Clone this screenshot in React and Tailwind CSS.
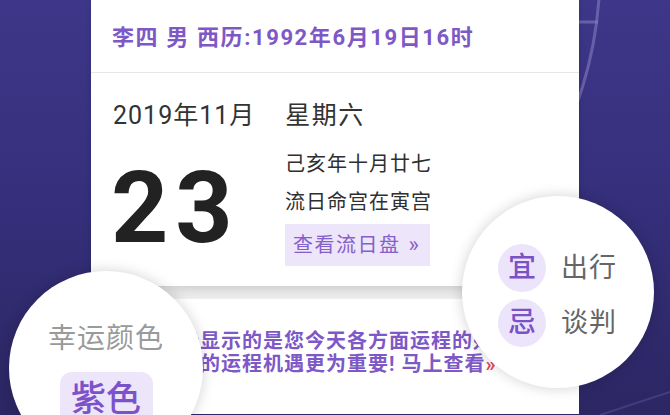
const cjk = { fontFamily: '"Roboto", "Noto Sans CJK SC", sans-serif' };

const Badge = ({ children }) => (
  <div className="w-[48px] h-[48px] rounded-full bg-[#ece4fa] flex items-center justify-center text-[28px] leading-none font-medium text-[#7a52c6]">
    {children}
  </div>
);

export default function App() {
  return (
    <div
      style={cjk}
      className="relative w-[670px] h-[415px] overflow-hidden bg-gradient-to-b from-[#3e3789] via-[#352f7b] to-[#2c2663]"
    >
      {/* faint wheel behind the card */}
      <svg className="absolute inset-0" width="670" height="415" viewBox="0 0 670 415" fill="none">
        <path d="M 600 -30 A 400 400 0 0 1 546 170" stroke="#8a83c4" strokeOpacity="0.55" strokeWidth="3" />
        <line x1="560" y1="22" x2="598" y2="22" stroke="#8a83c4" strokeOpacity="0.55" strokeWidth="3" />
        <line x1="600" y1="415" x2="670" y2="392" stroke="#6d66b0" strokeOpacity="0.35" strokeWidth="2" />
      </svg>

      <div className="relative ml-[91px] w-[488px] flex flex-col">
        <div className="bg-white shadow-[0_2px_6px_rgba(0,0,0,0.15)]">
          <div className="h-[73px] flex items-center pl-[21px] pt-[3px] border-b border-[#e6e6e6]">
            <span className="text-[22px] font-bold text-[#7d58c6] tracking-[1.6px] whitespace-nowrap">
              李四 男 西历:1992年6月19日16时
            </span>
          </div>
          <div className="pl-[20px] pt-[28px] pb-[20px]">
            <div className="ml-[2px] text-[25px] leading-[30px] text-[#333] tracking-[1px] whitespace-nowrap">
              2019年11月<span className="ml-[30px] tracking-[1.5px]">星期六</span>
            </div>
            <div className="mt-[14px] flex items-start">
              <div className="w-[174px] mt-[13px] text-[100px] leading-none font-bold text-[#222] tracking-[7px]">
                23
              </div>
              <div className="flex flex-col">
                <div className="text-[20px] leading-[38px] text-[#2f2f2f] tracking-[1px]">己亥年十月廿七</div>
                <div className="text-[20px] leading-[38px] text-[#2f2f2f] tracking-[1px]">流日命宫在寅宫</div>
                <div className="mt-[3px] h-[42px] w-[145px] bg-[#ede5fa] flex items-center pl-[8px] text-[20px] text-[#8560c9] tracking-[1.5px]">
                  查看流日盘<span className="ml-[8px] text-[22px] leading-none">»</span>
                </div>
              </div>
            </div>
          </div>
        </div>

        <div className="h-[13px] bg-gradient-to-b from-[#d4d4d4] via-[#e4e4e4] to-[#efefef]" />

        <div className="bg-white h-[115px] pl-[25px] pt-[31px] overflow-hidden">
          <div className="text-[20px] leading-[23px] font-bold text-[#7d58c6] tracking-[1px] whitespace-nowrap">
            今日运势显示的是您今天各方面运程的好坏，
          </div>
          <div className="text-[20px] leading-[23px] font-bold text-[#7d58c6] tracking-[1px] whitespace-nowrap">
            把握今天的运程机遇更为重要! 马上查看<span className="text-[#e04a5a]">»</span>
          </div>
        </div>
      </div>

      {/* lucky colour bubble */}
      <div className="absolute left-[9px] top-[271px] w-[194px] h-[194px] rounded-full bg-white shadow-[0_0_14px_rgba(0,0,0,0.18)] flex flex-col items-center">
        <div className="mt-[50px] text-[28px] leading-[36px] text-[#9a9a9a] tracking-[1px]">幸运颜色</div>
        <div className="mt-[15px] w-[93px] h-[60px] rounded-[12px] bg-[#ede5fa] flex items-start justify-center pt-[6px] text-[35px] leading-[44px] font-medium text-[#7b52c7]">
          紫色
        </div>
      </div>

      {/* good / bad bubble */}
      <div className="absolute left-[462px] top-[196px] w-[192px] h-[192px] rounded-full bg-white shadow-[0_0_14px_rgba(0,0,0,0.18)] flex flex-col pl-[36px] pt-[48px] gap-[7px]">
        <div className="flex items-center gap-[15px]">
          <Badge>宜</Badge>
          <span className="text-[27px] text-[#666] tracking-[1px]">出行</span>
        </div>
        <div className="flex items-center gap-[15px]">
          <Badge>忌</Badge>
          <span className="text-[27px] text-[#666] tracking-[1px]">谈判</span>
        </div>
      </div>
    </div>
  );
}
